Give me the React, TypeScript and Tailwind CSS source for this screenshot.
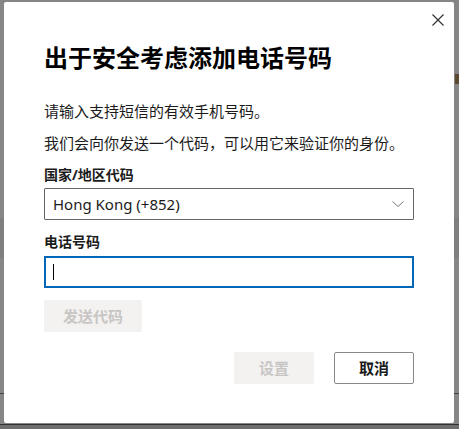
import React from "react";

const font = {
	fontFamily:
		'"Segoe UI", "Noto Sans", "Noto Sans CJK SC", "Microsoft YaHei", sans-serif',
};

export default function App() {
	return (
		<div
			className="relative w-[459px] h-[429px] overflow-hidden bg-[#868686] pl-[4px] pt-[2px]"
			style={font}
		>
			{/* dimmed page behind the dialog */}
			<div className="absolute inset-x-0 top-[218px] h-[40px] bg-[#7f7f7f]" />
			<div className="absolute inset-x-0 top-[393px] h-px bg-[#444]" />
			<div className="absolute inset-x-0 bottom-0 h-[5px] bg-[#6e6e6e] border-t border-[#333]" />
			<div className="absolute left-[455px] top-[74px] w-[4px] h-[10px] bg-[#5a4a30]" />

			{/* dialog */}
			<div className="relative flex flex-col w-[450px] h-[421px] bg-white rounded-[2px] px-[40px] pt-[40px]">
				<button
					type="button"
					className="absolute right-[10px] top-[12px] w-[12px] h-[12px] text-[#333]"
					aria-label="Close"
				>
					<svg viewBox="0 0 12 12" width="12" height="12">
						<path
							d="M0.5 0.5L11.5 11.5M11.5 0.5L0.5 11.5"
							stroke="currentColor"
							strokeWidth="1.2"
							fill="none"
						/>
					</svg>
				</button>

				<h2 className="text-[24px] leading-[32px] font-bold text-black">
					出于安全考虑添加电话号码
				</h2>

				<div className="mt-[27px] flex flex-col gap-[12px] text-[15px] leading-[20px] text-[#1b1b1b]">
					<p>请输入支持短信的有效手机号码。</p>
					<p>我们会向你发送一个代码，可以用它来验证你的身份。</p>
				</div>

				<label className="mt-[12px] text-[14px] leading-[20px] font-bold text-[#1b1b1b]">
					国家/地区代码
				</label>
				<div className="mt-[3px] flex items-center justify-between h-[32px] border border-[#666] rounded-[1px] pl-[8px] pr-[9px]">
					<span className="text-[15px] leading-[20px] text-[#1b1b1b]">
						Hong Kong (+852)
					</span>
					<svg viewBox="0 0 12 6" width="12" height="6" className="text-[#777]">
						<path d="M0.5 0.5L6 5.5L11.5 0.5" stroke="currentColor" strokeWidth="1" fill="none" />
					</svg>
				</div>

				<label className="mt-[12px] text-[14px] leading-[20px] font-bold text-[#1b1b1b]">
					电话号码
				</label>
				<div className="mt-[4px] flex items-center h-[32px] border-2 border-[#0067b8] pl-[7px]">
					<span className="w-px h-[16px] bg-black" />
				</div>

				<div className="mt-[12px] flex">
					<button
						type="button"
						className="w-[98px] h-[32px] rounded-[2px] bg-[#f3f2f1] text-[15px] font-bold text-[#c8c6c4]"
					>
						发送代码
					</button>
				</div>

				<div className="mt-[20px] flex justify-end gap-[20px]">
					<button
						type="button"
						className="w-[80px] h-[32px] rounded-[2px] bg-[#f3f2f1] text-[15px] font-bold text-[#c8c6c4]"
					>
						设置
					</button>
					<button
						type="button"
						className="w-[80px] h-[32px] rounded-[2px] border border-[#8a8886] bg-white text-[15px] font-bold text-[#1b1b1b]"
					>
						取消
					</button>
				</div>
			</div>
		</div>
	);
}
